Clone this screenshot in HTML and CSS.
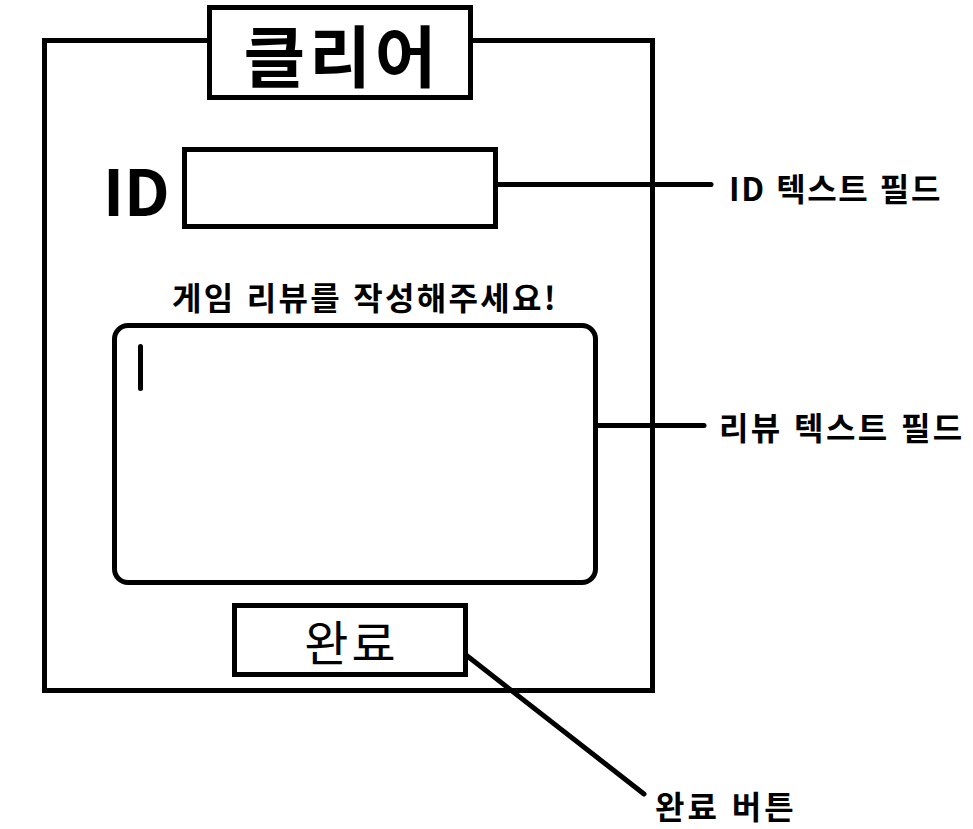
FILE: index.html
```html
<!DOCTYPE html>
<html lang="ko">
<head>
  <meta charset="UTF-8" />
  <meta name="viewport" content="width=device-width, initial-scale=1.0"/>
  <title>클리어</title>
  <link rel="stylesheet" href="styles.css">
</head>
<body>

  <div class="stage">
    <div class="panel">
      <div class="title">클리어</div>

      <div class="id-row">
        <span class="id-label">ID</span>
        <div class="id-input"></div>
      </div>

      <div class="review-title">게임 리뷰를 작성해주세요!</div>

      <div class="review-box">
        <div class="caret"></div>
      </div>

      <div class="done-btn">완료</div>
    </div>

    <!-- callout lines -->
    <svg class="wires" width="973" height="829" viewBox="0 0 973 829">
      <line x1="498" y1="184.5" x2="711" y2="184.5" />
      <line x1="598" y1="425.5" x2="704" y2="425.5" />
      <line x1="466" y1="655" x2="644" y2="794" />
    </svg>

    <div class="callout callout-id">ID 텍스트 필드</div>
    <div class="callout callout-review">리뷰 텍스트 필드</div>
    <div class="callout callout-done">완료 버튼</div>
  </div>

</body>
</html>
```

FILE: styles.css
```css
* {
  box-sizing: border-box;
}

body {
  margin: 0;
  background: #fff;
  color: #000;
  font-family: 'Noto Sans CJK KR', 'Noto Sans', sans-serif;
}

.stage {
  position: relative;
  width: 973px;
  height: 829px;
  padding: 38px 0 0 42px;
  overflow: hidden;
}

.panel {
  width: 613px;
  height: 655px;
  border: 5px solid #000;
}

.title {
  width: 266px;
  height: 95px;
  margin: -38px 0 0 160px;
  padding-left: 4px;
  border: 5px solid #000;
  background: #fff;
  display: flex;
  justify-content: center;
  align-items: center;
  font-size: 67px;
  font-weight: 700;
  letter-spacing: 4px;
  line-height: 1;
}

.id-row {
  display: flex;
  align-items: center;
  margin-top: 47px;
  padding-left: 56px;
}

.id-label {
  width: 79px;
  font-size: 64px;
  font-weight: 700;
  line-height: 1;
}

.id-input {
  width: 316px;
  height: 82px;
  border: 5px solid #000;
}

.review-title {
  margin: 51px 0 0 125px;
  font-size: 32px;
  font-weight: 700;
  letter-spacing: 2.3px;
  line-height: 1;
}

.review-box {
  width: 486px;
  height: 262px;
  margin: 11px 0 0 65px;
  border: 5px solid #000;
  border-radius: 16px;
  padding: 16px 0 0 21px;
}

.caret {
  width: 5px;
  height: 47px;
  border-radius: 3px;
  background: #000;
}

.done-btn {
  width: 236px;
  height: 74px;
  margin: 18px 0 0 185px;
  padding-left: 3px;
  border: 5px solid #000;
  display: flex;
  justify-content: center;
  align-items: center;
  font-size: 48px;
  letter-spacing: 3px;
  line-height: 1;
}

.wires {
  position: absolute;
  left: 0;
  top: 0;
}

.wires line {
  stroke: #000;
  stroke-width: 5;
  stroke-linecap: round;
}

.callout {
  position: absolute;
  font-size: 32px;
  font-weight: 700;
  letter-spacing: 2px;
  line-height: 1;
  white-space: nowrap;
}

.callout-id {
  left: 729px;
  top: 171px;
  letter-spacing: 1.6px;
}

.callout-review {
  left: 719px;
  top: 410px;
  letter-spacing: 2.4px;
}

.callout-done {
  left: 655px;
  top: 789px;
  letter-spacing: 3px;
}
```
